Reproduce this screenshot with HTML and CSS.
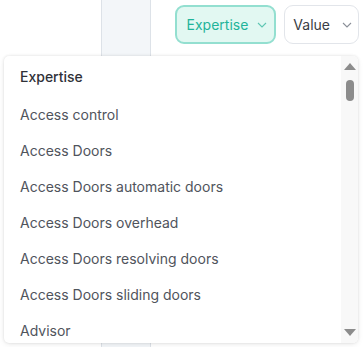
FILE: index.html
```html
<!DOCTYPE html>
<html lang="en">
<head>
    <meta charset="UTF-8">
    <meta name="viewport" content="width=device-width, initial-scale=1.0">
    <title>Filters</title>
    <link rel="stylesheet" href="styles.css">
</head>
<body>
    <div class="page">
        <div class="side"></div>
        <div class="rail"></div>
        <div class="main">
            <div class="filters">
                <button class="filter active">
                    Expertise
                    <svg class="chev" width="10" height="6" viewBox="0 0 10 6"><path d="M1 1l4 4 4-4" fill="none" stroke="currentColor" stroke-width="1.1"/></svg>
                </button>
                <button class="filter">
                    Value
                    <svg class="chev" width="10" height="6" viewBox="0 0 10 6"><path d="M1 1l4 4 4-4" fill="none" stroke="currentColor" stroke-width="1.1"/></svg>
                </button>
            </div>
        </div>
    </div>

    <div class="menu">
        <ul class="options">
            <li class="head">Expertise</li>
            <li>Access control</li>
            <li>Access Doors</li>
            <li>Access Doors automatic doors</li>
            <li>Access Doors overhead</li>
            <li>Access Doors resolving doors</li>
            <li>Access Doors sliding doors</li>
            <li>Advisor</li>
        </ul>
        <div class="scroll">
            <span class="arrow up"></span>
            <span class="thumb"></span>
            <span class="arrow down"></span>
        </div>
    </div>
</body>
</html>
```

FILE: styles.css
```css
body {
    margin: 0;
    background: #ffffff;
    font-family: Inter, "Noto Sans", sans-serif;
    font-size: 14px;
    color: #3a3d45;
}
.page {
    display: flex;
    height: 347px;
}
.side {
    width: 101px;
}
.rail {
    width: 48px;
    background: #f3f6f9;
    border-left: 1px solid #dde2e8;
    border-right: 1px solid #dde2e8;
}
.main {
    flex: 1;
}
.filters {
    display: flex;
    justify-content: flex-end;
    gap: 8px;
    padding: 5px 4px 0 0;
}
.filter {
    display: flex;
    align-items: center;
    gap: 12px;
    height: 39px;
    padding: 0 6px 0 8px;
    font-family: inherit;
    font-size: 14px;
    color: #3a3d45;
    background: #ffffff;
    border: 1px solid #e2e5ea;
    border-radius: 9px;
}
.filter.active {
    gap: 9px;
    padding: 0 7px 0 10px;
    color: #1fb49a;
    background: #e2f8f2;
    border: 2px solid #93dfd0;
}
.chev {
    color: #8a8f98;
}
.filter.active .chev {
    color: #5fc6b3;
}
.menu {
    position: absolute;
    left: 4px;
    top: 56px;
    width: 354px;
    height: 287px;
    display: flex;
    background: #ffffff;
    border-radius: 5px;
    box-shadow: 0 0 3px rgba(0, 0, 0, 0.12), 0 2px 6px rgba(0, 0, 0, 0.06);
    overflow: hidden;
}
.options {
    flex: 1;
    list-style: none;
    margin: 0;
    padding: 12px 0 0 16px;
}
.options li {
    height: 36px;
    line-height: 18px;
    color: #50545c;
}
.options li.head {
    height: 38px;
    font-weight: 500;
    color: #2f3138;
}
.scroll {
    position: relative;
    width: 17px;
    background: #f8f8f8;
}
.arrow {
    position: absolute;
    left: 3px;
    width: 0;
    height: 0;
    border-left: 6px solid transparent;
    border-right: 6px solid transparent;
}
.arrow.up {
    top: 7px;
    border-bottom: 7px solid #8c8c8c;
}
.arrow.down {
    bottom: 7px;
    border-top: 7px solid #8c8c8c;
}
.thumb {
    position: absolute;
    left: 5px;
    top: 24px;
    width: 8px;
    height: 21px;
    background: #8c8c8c;
    border-radius: 4px;
}
```
